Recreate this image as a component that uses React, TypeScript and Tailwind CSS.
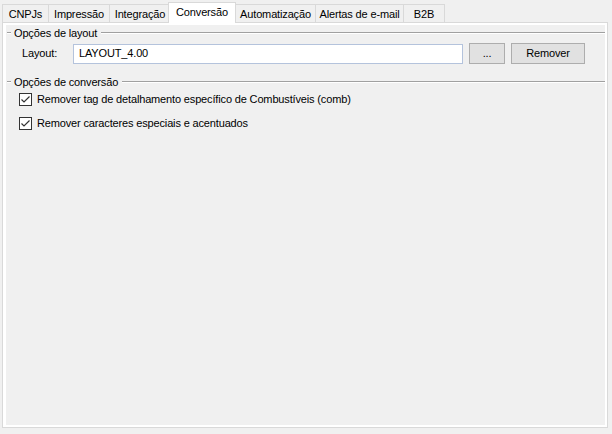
import React from 'react';

const tabs = [
  { label: 'CNPJs', w: 'w-[47px]' },
  { label: 'Impressão', w: 'w-[62px]' },
  { label: 'Integração', w: 'w-[62px]' },
  { label: 'Conversão', w: 'w-[68px]', active: true },
  { label: 'Automatização', w: 'w-[81px]' },
  { label: 'Alertas de e-mail', w: 'w-[89px]' },
  { label: 'B2B', w: 'w-[42px]' },
];

const GroupHeader: React.FC<{ title: string; className?: string }> = ({ title, className }) => (
  <div className={`flex items-center h-[14px] ${className ?? ''}`}>
    <div className="ml-[1px] w-[4px] border-t border-b border-t-[#a0a0a0] border-b-white" />
    <span className="ml-[3px] leading-[14px] whitespace-nowrap">{title}</span>
    <div className="ml-[4px] flex-1 border-t border-b border-t-[#a0a0a0] border-b-white" />
  </div>
);

const Check: React.FC<{ label: string; className?: string }> = ({ label, className }) => (
  <div className={`flex items-center h-[13px] pl-[13px] ${className ?? ''}`}>
    <div className="w-[13px] h-[13px] border border-[#333333] bg-white flex items-center justify-center">
      <svg width="11" height="11" viewBox="0 0 11 11">
        <path d="M1.5 5.5 L4 8 L9.5 2.5" fill="none" stroke="#333333" strokeWidth="1.2" />
      </svg>
    </div>
    <span className="ml-[5px] leading-[13px] whitespace-nowrap">{label}</span>
  </div>
);

export default function App() {
  return (
    <div
      className="w-[612px] h-[434px] bg-[#f0f0f0] text-[11px] tracking-[-0.15px] text-black pl-[2px] pt-[2px] overflow-hidden"
      style={{ fontFamily: '"Liberation Sans", Arial, sans-serif' }}
    >
      {/* abas */}
      <div className="flex items-end h-[20px]">
        {tabs.map((t, i) =>
          t.active ? (
            <div
              key={t.label}
              className={`${t.w} h-[21px] -mb-px -ml-[3px] relative z-10 bg-white border border-b-0 border-[#d9d9d9] pt-[3px] text-center leading-[13px] whitespace-nowrap`}
            >
              {t.label}
            </div>
          ) : (
            <div
              key={t.label}
              className={`${t.w} h-[18px] ${i === 0 ? '' : '-ml-px'} bg-[#f0f0f0] border border-b-0 border-[#d9d9d9] pt-[3px] text-center leading-[13px] whitespace-nowrap`}
            >
              {t.label}
            </div>
          )
        )}
      </div>

      {/* página */}
      <div className="w-[606px] h-[406px] border border-[#d9d9d9] bg-white pt-[2px] pb-[2px] pl-[3px] pr-[2px]">
        <div className="h-full bg-[#f0f0f0] flex flex-col">
          <GroupHeader title="Opções de layout" className="mt-[1px]" />

          <div className="flex items-center h-[21px] mt-[3px] pl-[16px]">
            <span className="w-[51px] leading-[13px]">Layout:</span>
            <div className="w-[390px] h-[20px] border border-[#b4c3dc] bg-white flex items-center pl-[5px] leading-[13px]">
              LAYOUT_4.00
            </div>
            <button className="ml-[6px] w-[36px] h-[21px] border border-[#adadad] bg-[#e1e1e1] leading-[13px] text-[#000000]">
              ...
            </button>
            <button className="ml-[6px] w-[74px] h-[21px] border border-[#adadad] bg-[#e1e1e1] leading-[13px]">
              Remover
            </button>
          </div>

          <GroupHeader title="Opções de conversão" className="mt-[11px]" />

          <Check label="Remover tag de detalhamento específico de Combustíveis (comb)" className="mt-[4px]" />
          <Check label="Remover caracteres especiais e acentuados" className="mt-[11px]" />
        </div>
      </div>
    </div>
  );
}
